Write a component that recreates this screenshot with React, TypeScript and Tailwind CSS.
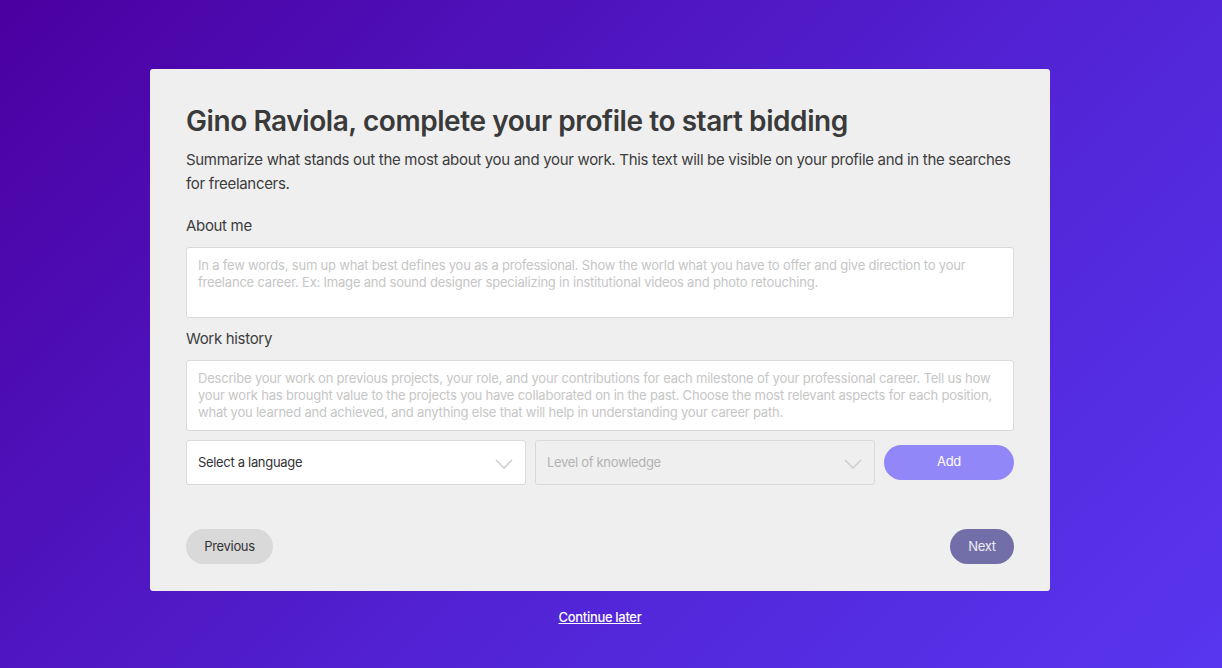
import React from "react";

function Chevron() {
  return (
    <svg width="18" height="10" viewBox="0 0 18 10" fill="none" className="shrink-0">
      <path d="M1 1 L9 9 L17 1" stroke="#cfcfcf" strokeWidth="1.6" />
    </svg>
  );
}

export default function App() {
  return (
    <div
      className="w-[1222px] h-[668px] pr-[22px] flex flex-col items-center bg-[linear-gradient(135deg,#4b00a1_0%,#5224d6_60%,#5836ef_100%)] text-[#3a3a3a] tracking-[-0.02em]"
      style={{ fontFamily: "Inter, 'Noto Sans', sans-serif" }}
    >
      <div className="mt-[69px] w-[900px] bg-[#efefef] rounded-[3px] px-[36px] pt-[35px] pb-[27px] flex flex-col">
        <h1 className="text-[28px] leading-[34px] font-semibold text-[#3a3a3a] tracking-[-0.43px]">
          Gino Raviola, complete your profile to start bidding
        </h1>
        <p className="mt-[10px] text-[15px] leading-[24px] text-[#3d3d3d] tracking-[-0.31px]">
          Summarize what stands out the most about you and your work. This text will be visible on your profile and in the searches for freelancers.
        </p>
        <label className="mt-[18px] text-[15px] leading-[24px] text-[#3d3d3d]">About me</label>
        <div className="mt-[9px] h-[71px] bg-white border border-[#d9d9d9] rounded-[3px] px-[11px] pt-[9px] text-[13px] leading-[17px] text-[#c6c6c6] tracking-[-0.2px]">
          In a few words, sum up what best defines you as a professional. Show the world what you have to offer and give direction to your freelance career. Ex: Image and sound designer specializing in institutional videos and photo retouching.
        </div>
        <label className="mt-[9px] text-[15px] leading-[24px] text-[#3d3d3d]">Work history</label>
        <div className="mt-[9px] h-[71px] bg-white border border-[#d9d9d9] rounded-[3px] px-[11px] pt-[9px] text-[13px] leading-[17px] text-[#c6c6c6] tracking-[-0.2px]">
          Describe your work on previous projects, your role, and your contributions for each milestone of your professional career. Tell us how your work has brought value to the projects you have collaborated on in the past. Choose the most relevant aspects for each position, what you learned and achieved, and anything else that will help in understanding your career path.
        </div>
        <div className="mt-[9px] flex items-center gap-[9px]">
          <div className="w-[340px] h-[45px] bg-white border border-[#d9d9d9] rounded-[3px] pl-[11px] pr-[12px] flex items-center justify-between">
            <span className="text-[13px] text-[#333]">Select a language</span>
            <div className="mt-[2px]"><Chevron /></div>
          </div>
          <div className="w-[340px] h-[45px] bg-[#efefef] border border-[#d9d9d9] rounded-[3px] pl-[11px] pr-[12px] flex items-center justify-between">
            <span className="text-[13px] text-[#b3b3b3]">Level of knowledge</span>
            <div className="mt-[2px]"><Chevron /></div>
          </div>
          <button className="w-[130px] h-[35px] rounded-full bg-[#9287f9] text-white text-[13px] flex items-center justify-center pb-[2px]">
            Add
          </button>
        </div>
        <div className="mt-[44px] flex justify-between">
          <button className="w-[87px] h-[35px] rounded-full bg-[#d9d9d9] text-[#333] text-[13px] flex items-center justify-center">
            Previous
          </button>
          <button className="w-[64px] h-[35px] rounded-full bg-[#726fa8] text-[#ededf5] text-[13px] flex items-center justify-center">
            Next
          </button>
        </div>
      </div>
      <a className="mt-[18px] text-[13px] font-medium text-white underline leading-[17px]" href="#">
        Continue later
      </a>
    </div>
  );
}
